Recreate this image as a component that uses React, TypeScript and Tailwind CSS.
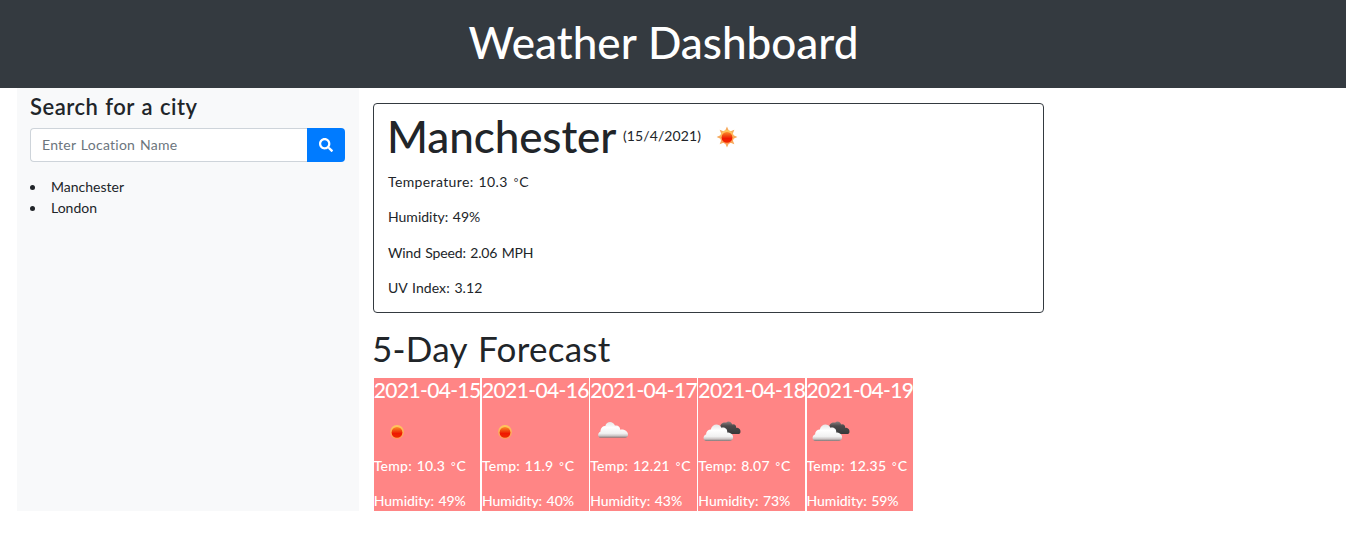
import { useId } from "react";
import { FaSearch } from "react-icons/fa";

type Sky = "sun" | "cloud" | "broken";

interface Day {
  date: string;
  sky: Sky;
  temp: string;
  humidity: string;
}

const days: Day[] = [
  { date: "2021-04-15", sky: "sun", temp: "10.3", humidity: "49%" },
  { date: "2021-04-16", sky: "sun", temp: "11.9", humidity: "40%" },
  { date: "2021-04-17", sky: "cloud", temp: "12.21", humidity: "43%" },
  { date: "2021-04-18", sky: "broken", temp: "8.07", humidity: "73%" },
  { date: "2021-04-19", sky: "broken", temp: "12.35", humidity: "59%" },
];

const RAYS = [0, 45, 90, 135, 180, 225, 270, 315];

function SkyIcon({ sky, rays = false }: { sky: Sky; rays?: boolean }) {
  const id = useId();
  return (
    <svg width="50" height="50" viewBox="0 0 50 50" className="block" aria-hidden="true">
      <defs>
        <linearGradient id={`${id}white`} x1="0" y1="0" x2="0" y2="1">
          <stop offset="0" stopColor="#e6e6e6" />
          <stop offset="0.35" stopColor="#ffffff" />
          <stop offset="0.72" stopColor="#f1f1f1" />
          <stop offset="0.88" stopColor="#c9c3c3" />
          <stop offset="1" stopColor="#7f7373" />
        </linearGradient>
        <linearGradient id={`${id}dark`} x1="0" y1="0" x2="0" y2="1">
          <stop offset="0" stopColor="#8b8080" />
          <stop offset="0.35" stopColor="#4c4a4b" />
          <stop offset="1" stopColor="#383839" />
        </linearGradient>
        <linearGradient id={`${id}red`} x1="0" y1="0" x2="0" y2="1">
          <stop offset="0" stopColor="#ff8a2a" />
          <stop offset="0.35" stopColor="#f04a10" />
          <stop offset="0.6" stopColor="#f01800" />
          <stop offset="1" stopColor="#ee2a00" />
        </linearGradient>
        <linearGradient id={`${id}rim`} x1="0" y1="0" x2="0" y2="1">
          <stop offset="0" stopColor="#ffc85c" />
          <stop offset="1" stopColor="#ff9a58" />
        </linearGradient>
      </defs>
      {sky === "sun" && (
        <>
          {rays &&
            RAYS.map((angle) => (
              <path key={angle} d="M25 14.6 L27.2 19.6 L22.8 19.6 Z" fill="#f6a95c" transform={`rotate(${angle} 25 25)`} />
            ))}
          <circle cx="25" cy="25" r="6.9" fill={`url(#${id}rim)`} />
          <circle cx="25" cy="25.4" r="5.4" fill={`url(#${id}red)`} />
        </>
      )}
      {sky === "cloud" && (
        <path
          d="M13 30.8 C9.6 30.6 9 26.2 12.5 24.4 C12.4 20.8 15 18.8 17.3 18.9 C18.5 13.8 25.2 13.6 26.9 18.6 C30 17.8 32.2 20 32.2 22.7 C36 22.1 39.6 24 40 27.2 C40.2 29.4 39 30.8 37 30.8 Z"
          fill={`url(#${id}white)`}
        />
      )}
      {sky === "broken" && (
        <g transform="translate(1.8 0)">
          <path
            d="M22.6 22 C21.5 17.5 24.8 14.6 28.4 15.6 C30.2 13.8 33.4 14.4 34.4 17.6 C36.6 16.6 38.6 18.4 38.3 20.7 C41.4 20.7 43.2 22.8 42.6 25.4 C42.2 26.5 41.4 27 40.2 27 L31 27 Z"
            fill={`url(#${id}dark)`}
          />
          <path
            d="M8.6 34 C5 33.2 4.8 28.7 8.2 27.4 C8.4 24.3 10.6 22.6 13 22.6 C14.4 16.5 21.5 16 23.6 20.8 C27.3 19.6 30 22.5 29.4 25.5 C32.3 25.5 35.4 27.4 35.3 30.2 C35.2 32.7 33.8 34 31.5 34 Z"
            fill={`url(#${id}white)`}
          />
        </g>
      )}
    </svg>
  );
}

function Celsius() {
  return (
    <span className="ml-[1px]">
      <span className="text-[11px] leading-none tracking-[1px]">°</span>C
    </span>
  );
}

export default function App() {
  return (
    <div className="h-[541px] w-full overflow-hidden bg-white font-['Lato',sans-serif] text-[14px] leading-[21px] text-[#212529] [font-variant-ligatures:none]">
      <header className="h-[88px] bg-[#343a40] pt-[16px]">
        <h1 className="w-[1327px] text-center text-[44px] leading-[53px] font-medium text-white [word-spacing:1px]">
          Weather Dashboard
        </h1>
      </header>
      <div className="flex items-start">
        <aside className="ml-[17px] h-[423px] w-[342px] bg-[#f8f9fa] px-[13px] pt-[6px]">
          <h2 className="text-[22px] leading-[25px] font-semibold tracking-[0.5px] [word-spacing:1px]">Search for a city</h2>
          <form className="mt-[9px] flex h-[34px] w-[315px]" onSubmit={(e) => e.preventDefault()}>
            <input
              aria-label="City"
              placeholder="Enter Location Name"
              className="min-w-0 flex-1 rounded-l-[4px] border border-r-0 border-[#ced4da] bg-white px-[11px] pb-[2px] tracking-[0.25px] outline-none [word-spacing:1px] placeholder:text-[#6c757d]"
            />
            <button aria-label="Search" className="flex w-[38px] items-center justify-center rounded-r-[4px] bg-[#007bff] text-white">
              <FaSearch size={14} />
            </button>
          </form>
          <ul className="mt-[15px]">
            {["Manchester", "London"].map((city) => (
              <li key={city} className="flex h-[21px] items-center gap-[16px]">
                <span className="size-[5px] rounded-full bg-[#212529]" />
                <span className="pb-[2px]">{city}</span>
              </li>
            ))}
          </ul>
        </aside>
        <main className="ml-[14px] pt-[15px]">
          <section className="h-[210px] w-[671px] rounded-[4px] border border-[#343a40] pt-[6px] pl-[14px]">
            <div className="flex h-[53px] items-center">
              <h2 className="-ml-px w-[236px] text-[44px] leading-[53px] font-medium tracking-[-0.1px]">Manchester</h2>
              <span className="w-[79px] pb-[2px] tracking-[0.1px]">(15/4/2021)</span>
              <SkyIcon sky="sun" rays />
            </div>
            <div className="mt-[8px] flex flex-col gap-[14.3px] [word-spacing:1px]">
              <p className="tracking-[0.38px]">
                Temperature: 10.3 <Celsius />
              </p>
              <p>Humidity: 49%</p>
              <p className="tracking-[-0.15px]">Wind Speed: 2.06 MPH</p>
              <p className="tracking-[0.07px]">UV Index: 3.12</p>
            </div>
          </section>
          <h2 className="mt-[14px] -ml-px text-[35px] leading-[42px] tracking-[0.25px] [word-spacing:2px]">5-Day Forecast</h2>
          <div className="mt-[9px] ml-[0.8px] flex gap-[1.5px] text-white">
            {days.map((day) => (
              <article key={day.date} className="h-[133px] w-[106.7px] bg-[#ff8585] whitespace-nowrap">
                <h3 className="text-[21px] leading-[24px] font-medium tracking-[-0.62px]">{day.date}</h3>
                <div className="mt-[5px] -ml-[2px]">
                  <SkyIcon sky={day.sky} />
                </div>
                <p className="-mt-[2px] font-medium tracking-[0.22px] [word-spacing:1px]">
                  Temp: {day.temp} <Celsius />
                </p>
                <p className="mt-[14px] font-medium tracking-[-0.05px] [word-spacing:1px]">Humidity: {day.humidity}</p>
              </article>
            ))}
          </div>
        </main>
      </div>
    </div>
  );
}
